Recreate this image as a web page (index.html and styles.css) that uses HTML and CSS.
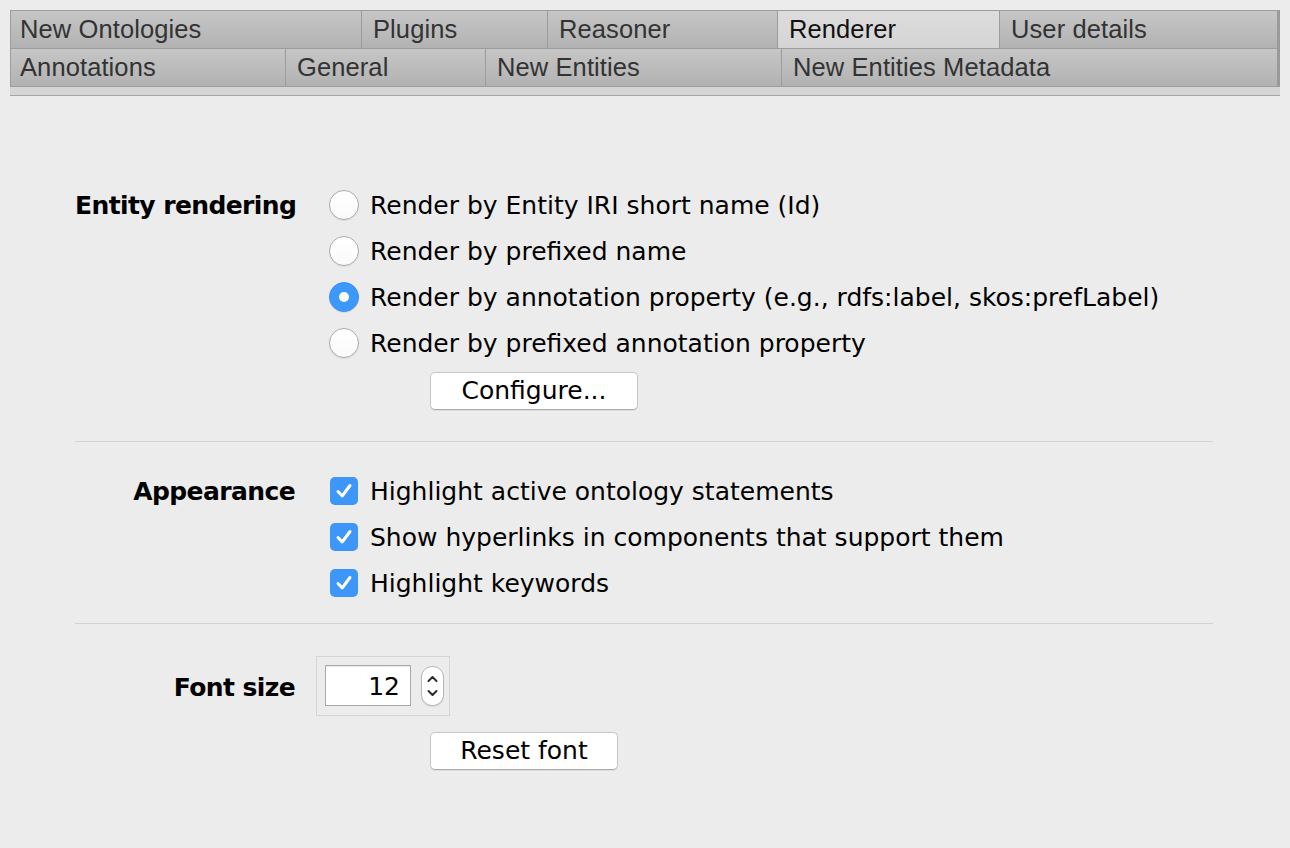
FILE: index.html
```html
<!DOCTYPE html>
<html lang="en">
<head>
<meta charset="utf-8">
<title>Preferences - Renderer</title>
<link rel="stylesheet" href="styles.css">
</head>
<body>
<div class="tabs">
  <div class="tab-row">
    <div class="tab t-newonto">New Ontologies</div>
    <div class="tab t-plugins">Plugins</div>
    <div class="tab t-reasoner">Reasoner</div>
    <div class="tab t-renderer selected">Renderer</div>
    <div class="tab t-user last">User details</div>
  </div>
  <div class="tab-row">
    <div class="tab t-annot">Annotations</div>
    <div class="tab t-general">General</div>
    <div class="tab t-newent">New Entities</div>
    <div class="tab t-newmeta last">New Entities Metadata</div>
  </div>
  <div class="tab-strip"></div>
</div>

<main class="prefs">
  <section class="group group-render">
    <div class="group-label">Entity rendering</div>
    <div class="group-controls">
      <label class="option"><span class="indicator"><span class="radio"></span></span>Render by Entity IRI short name (Id)</label>
      <label class="option"><span class="indicator"><span class="radio"></span></span>Render by prefixed name</label>
      <label class="option"><span class="indicator"><span class="radio checked"></span></span>Render by annotation property (e.g., rdfs:label, skos:prefLabel)</label>
      <label class="option"><span class="indicator"><span class="radio"></span></span>Render by prefixed annotation property</label>
      <button class="btn btn-configure">Configure...</button>
    </div>
  </section>

  <hr class="sep sep-first">

  <section class="group group-appearance">
    <div class="group-label">Appearance</div>
    <div class="group-controls">
      <label class="option"><span class="indicator"><span class="checkbox"><svg viewBox="0 0 28 28" width="28" height="28"><path d="M8 14.5 L12.2 19 L20 8.5" fill="none" stroke="#fff" stroke-width="3" stroke-linecap="round" stroke-linejoin="round"/></svg></span></span>Highlight active ontology statements</label>
      <label class="option"><span class="indicator"><span class="checkbox"><svg viewBox="0 0 28 28" width="28" height="28"><path d="M8 14.5 L12.2 19 L20 8.5" fill="none" stroke="#fff" stroke-width="3" stroke-linecap="round" stroke-linejoin="round"/></svg></span></span>Show hyperlinks in components that support them</label>
      <label class="option"><span class="indicator"><span class="checkbox"><svg viewBox="0 0 28 28" width="28" height="28"><path d="M8 14.5 L12.2 19 L20 8.5" fill="none" stroke="#fff" stroke-width="3" stroke-linecap="round" stroke-linejoin="round"/></svg></span></span>Highlight keywords</label>
    </div>
  </section>

  <hr class="sep sep-second">

  <section class="group group-font">
    <div class="group-label font-label">Font size</div>
    <div class="group-controls">
      <div class="spinner">
        <div class="spin-field">12</div>
        <div class="stepper">
          <svg viewBox="0 0 23 40" width="23" height="40"><path d="M7.5 15 L11.5 11 L15.5 15" fill="none" stroke="#2b2b2b" stroke-width="2" stroke-linecap="round" stroke-linejoin="round"/><path d="M7.5 25 L11.5 29 L15.5 25" fill="none" stroke="#2b2b2b" stroke-width="2" stroke-linecap="round" stroke-linejoin="round"/></svg>
        </div>
      </div>
      <button class="btn btn-reset">Reset font</button>
    </div>
  </section>
</main>
</body>
</html>
```

FILE: styles.css
```css
html, body {
  margin: 0;
  padding: 0;
}

body {
  background: #ececec;
  width: 1290px;
  height: 848px;
  overflow: hidden;
  font-family: "DejaVu Sans", "Liberation Sans", sans-serif;
  color: #000;
}

/* ---------- Tabs ---------- */
.tabs {
  margin: 10px 10px 0 10px;
  width: 1270px;
}

.tab-row {
  display: flex;
  border-left: 1px solid #9c9c9c;
}

.tab-row:first-child {
  border-top: 1px solid #9c9c9c;
}

.tab {
  box-sizing: border-box;
  height: 38px;
  padding-left: 10px;
  border-right: 1px solid #9c9c9c;
  border-bottom: 1px solid #9c9c9c;
  background: linear-gradient(#c6c6c6, #b2b2b2);
  font-family: "Liberation Sans", Arial, sans-serif;
  font-size: 25.5px;
  letter-spacing: 0.1px;
  line-height: 36px;
  color: #333;
  white-space: nowrap;
  overflow: hidden;
}

.tab.selected {
  background: linear-gradient(#dddddd, #d4d4d4);
  color: #111;
}

.tab.last {
  border-right: 3px solid #9a9a9a;
}

.t-newonto { flex: 0 0 351px; padding-left: 9px; }
.t-plugins { flex: 0 0 186px; padding-left: 11px; }
.t-reasoner { flex: 0 0 230px; padding-left: 11px; }
.t-renderer { flex: 0 0 222px; padding-left: 11px; }
.t-user { flex: 1 1 auto; padding-left: 11px; }

.t-annot { flex: 0 0 275px; padding-left: 9px; }
.t-general { flex: 0 0 200px; padding-left: 11px; }
.t-newent { flex: 0 0 296px; padding-left: 11px; }
.t-newmeta { flex: 1 1 auto; padding-left: 11px; }

.tab-strip {
  height: 8px;
  background: #d6d6d6;
  border-bottom: 1px solid #a6a6a6;
}

/* ---------- Preferences body ---------- */
.prefs {
  margin-left: 75px;
  width: 1138px;
  padding-top: 86px;
  font-size: 25px;
  letter-spacing: 0;
}

.group {
  display: grid;
  grid-template-columns: 220px 1fr;
  column-gap: 34px;
}

.group-label {
  text-align: right;
  font-weight: bold;
  letter-spacing: -0.6px;
  line-height: 48px;
  height: 46px;
  white-space: nowrap;
}

.group-controls {
  display: flex;
  flex-direction: column;
  align-items: flex-start;
}

.option {
  display: flex;
  align-items: center;
  height: 46px;
  gap: 11px;
  white-space: nowrap;
}

.indicator {
  width: 30px;
  height: 30px;
  display: flex;
  align-items: center;
  justify-content: center;
}

.radio {
  box-sizing: border-box;
  width: 30px;
  height: 30px;
  border-radius: 50%;
  border: 1px solid #acacac;
  background: linear-gradient(#ffffff, #fafafa);
  box-shadow: 0 1px 1px rgba(0, 0, 0, 0.08);
  position: relative;
}

.radio.checked {
  border: 1px solid #3590f5;
  background: #3d98fb;
}

.radio.checked::after {
  content: "";
  position: absolute;
  left: 50%;
  top: 50%;
  width: 10px;
  height: 10px;
  margin: -5px 0 0 -5px;
  border-radius: 50%;
  background: #fff;
}

.checkbox {
  width: 28px;
  height: 28px;
  border-radius: 5px;
  background: #3d96f8;
  display: block;
}

.checkbox svg {
  display: block;
}

/* ---------- Buttons ---------- */
.btn {
  box-sizing: border-box;
  height: 38px;
  border: 1px solid #c6c6c6;
  border-bottom-color: #a9a9a9;
  border-radius: 5px;
  background: #ffffff;
  box-shadow: 0 1px 0 rgba(0, 0, 0, 0.06);
  font-family: "DejaVu Sans", "Liberation Sans", sans-serif;
  font-size: 25px;
  color: #000;
  padding: 0;
  line-height: 34px;
  text-align: center;
}

.btn-configure {
  width: 208px;
  margin: 6px 0 0 101px;
}

.btn-reset {
  width: 188px;
  margin: 16px 0 0 101px;
}

/* ---------- Separators ---------- */
.sep {
  border: 0;
  height: 1px;
  background: #d2d2d2;
  margin: 0;
}

.sep-first {
  margin-top: 31px;
  margin-bottom: 26px;
}

.sep-second {
  margin-top: 17px;
  margin-bottom: 32px;
}

/* ---------- Spinner ---------- */
.font-label {
  height: 60px;
  line-height: 64px;
}

.spinner {
  box-sizing: border-box;
  display: flex;
  align-items: flex-start;
  gap: 10px;
  width: 134px;
  height: 60px;
  margin-left: -13px;
  padding: 8px 5px 0 8px;
  border: 1px solid #d5d5d5;
}

.spin-field {
  box-sizing: border-box;
  width: 86px;
  height: 41px;
  border: 1px solid #a9a9a9;
  background: #fff;
  box-shadow: inset 0 1px 0 #ececec;
  text-align: right;
  padding-right: 10px;
  line-height: 41px;
  font-size: 25px;
}

.stepper {
  box-sizing: border-box;
  width: 23px;
  height: 40px;
  margin-top: 1px;
  border: 1px solid #b8b8b8;
  border-radius: 11px;
  background: #fff;
  box-shadow: 0 1px 1px rgba(0, 0, 0, 0.08);
  overflow: hidden;
}

.stepper svg {
  display: block;
  margin: -1px 0 0 -1px;
}
```
